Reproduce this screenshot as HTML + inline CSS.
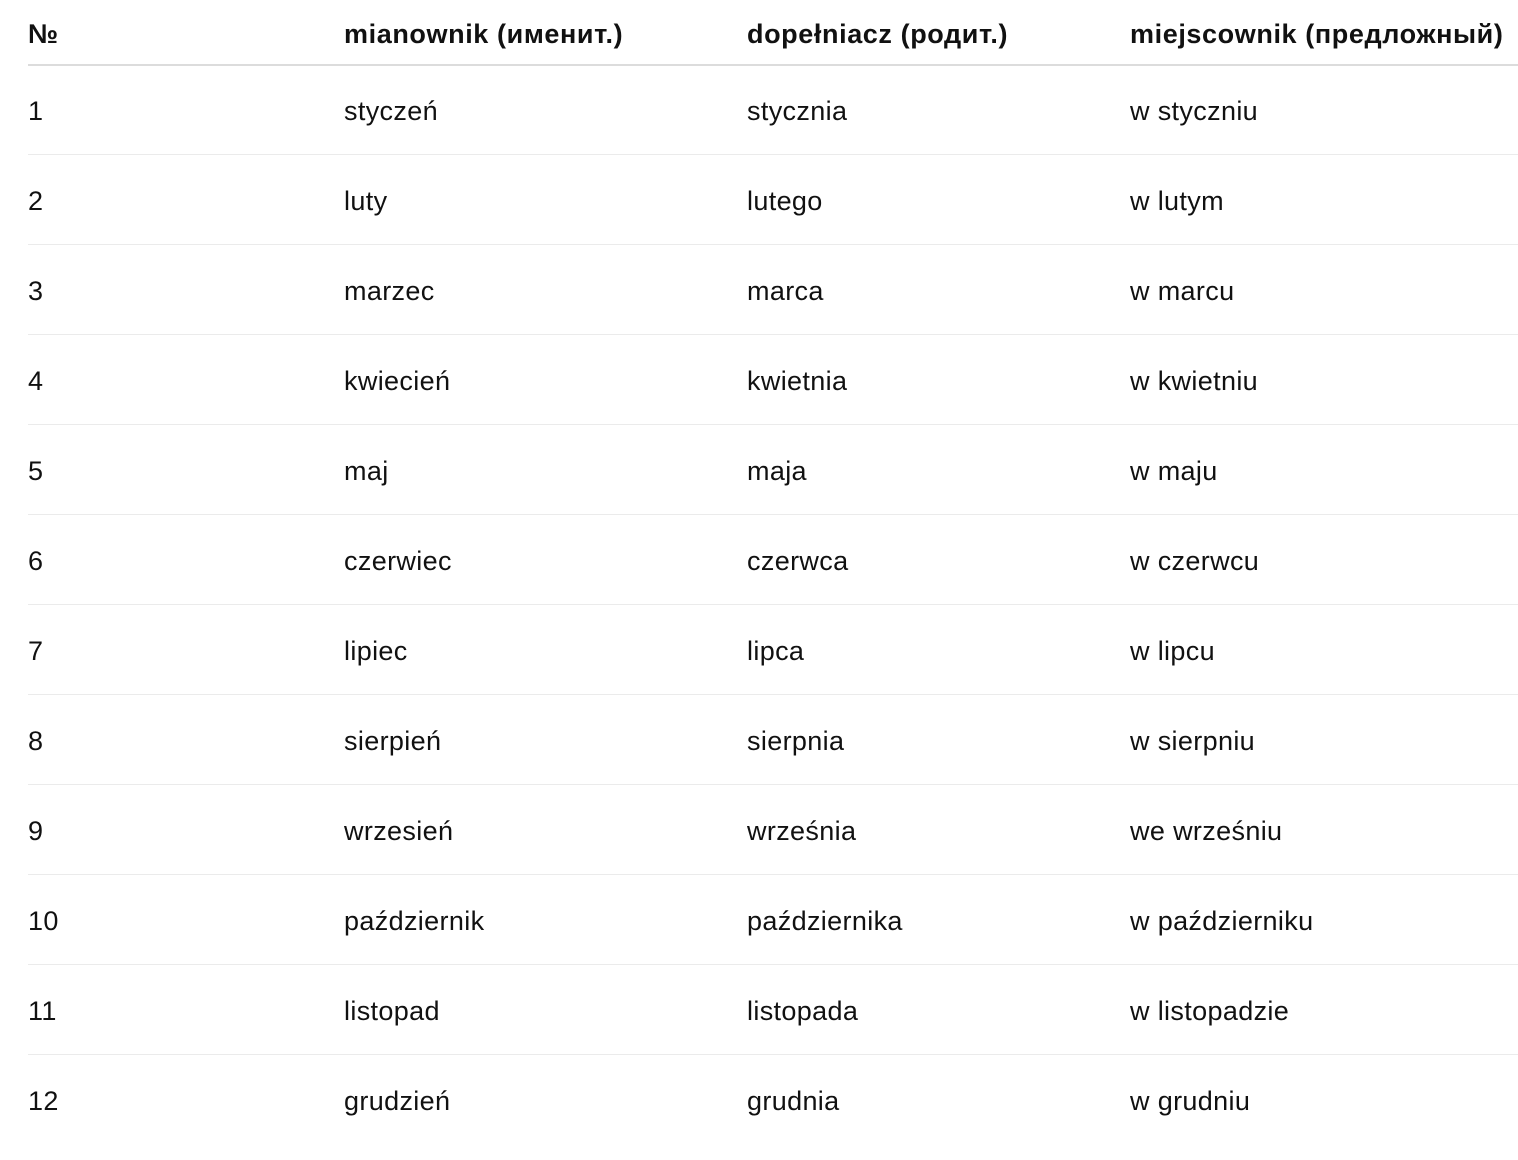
<!DOCTYPE html>
<html><head><meta charset="utf-8"><style>
body{margin:0;background:#fff;width:1518px;height:1160px;overflow:hidden;font-family:"Liberation Sans",Arial,sans-serif;color:#111;font-size:27px;letter-spacing:0.35px;position:relative}
.r{position:absolute;left:28px;right:0;height:40px;line-height:40px}
.r span{position:absolute;white-space:nowrap}
.c0{left:0}.c1{left:316px}.c2{left:719px}.c3{left:1102px}
.h{font-weight:bold;letter-spacing:0.6px}
.b{position:absolute;left:28px;right:0;height:1px;background:#ebebeb}
.hb{height:2px;background:#dcdcdc}
</style></head><body>
<div class="r h" style="top:14px"><span class="c0">№</span><span class="c1">mianownik (именит.)</span><span class="c2">dopełniacz (родит.)</span><span class="c3">miejscownik (предложный)</span></div>
<div class="b hb" style="top:64px"></div>
<div class="r" style="top:91px"><span class="c0">1</span><span class="c1">styczeń</span><span class="c2">stycznia</span><span class="c3">w styczniu</span></div>
<div class="b" style="top:154px"></div>
<div class="r" style="top:181px"><span class="c0">2</span><span class="c1">luty</span><span class="c2">lutego</span><span class="c3">w lutym</span></div>
<div class="b" style="top:244px"></div>
<div class="r" style="top:271px"><span class="c0">3</span><span class="c1">marzec</span><span class="c2">marca</span><span class="c3">w marcu</span></div>
<div class="b" style="top:334px"></div>
<div class="r" style="top:361px"><span class="c0">4</span><span class="c1">kwiecień</span><span class="c2">kwietnia</span><span class="c3">w kwietniu</span></div>
<div class="b" style="top:424px"></div>
<div class="r" style="top:451px"><span class="c0">5</span><span class="c1">maj</span><span class="c2">maja</span><span class="c3">w maju</span></div>
<div class="b" style="top:514px"></div>
<div class="r" style="top:541px"><span class="c0">6</span><span class="c1">czerwiec</span><span class="c2">czerwca</span><span class="c3">w czerwcu</span></div>
<div class="b" style="top:604px"></div>
<div class="r" style="top:631px"><span class="c0">7</span><span class="c1">lipiec</span><span class="c2">lipca</span><span class="c3">w lipcu</span></div>
<div class="b" style="top:694px"></div>
<div class="r" style="top:721px"><span class="c0">8</span><span class="c1">sierpień</span><span class="c2">sierpnia</span><span class="c3">w sierpniu</span></div>
<div class="b" style="top:784px"></div>
<div class="r" style="top:811px"><span class="c0">9</span><span class="c1">wrzesień</span><span class="c2">września</span><span class="c3">we wrześniu</span></div>
<div class="b" style="top:874px"></div>
<div class="r" style="top:901px"><span class="c0">10</span><span class="c1">październik</span><span class="c2">października</span><span class="c3">w październiku</span></div>
<div class="b" style="top:964px"></div>
<div class="r" style="top:991px"><span class="c0">11</span><span class="c1">listopad</span><span class="c2">listopada</span><span class="c3">w listopadzie</span></div>
<div class="b" style="top:1054px"></div>
<div class="r" style="top:1081px"><span class="c0">12</span><span class="c1">grudzień</span><span class="c2">grudnia</span><span class="c3">w grudniu</span></div>
</body></html>
